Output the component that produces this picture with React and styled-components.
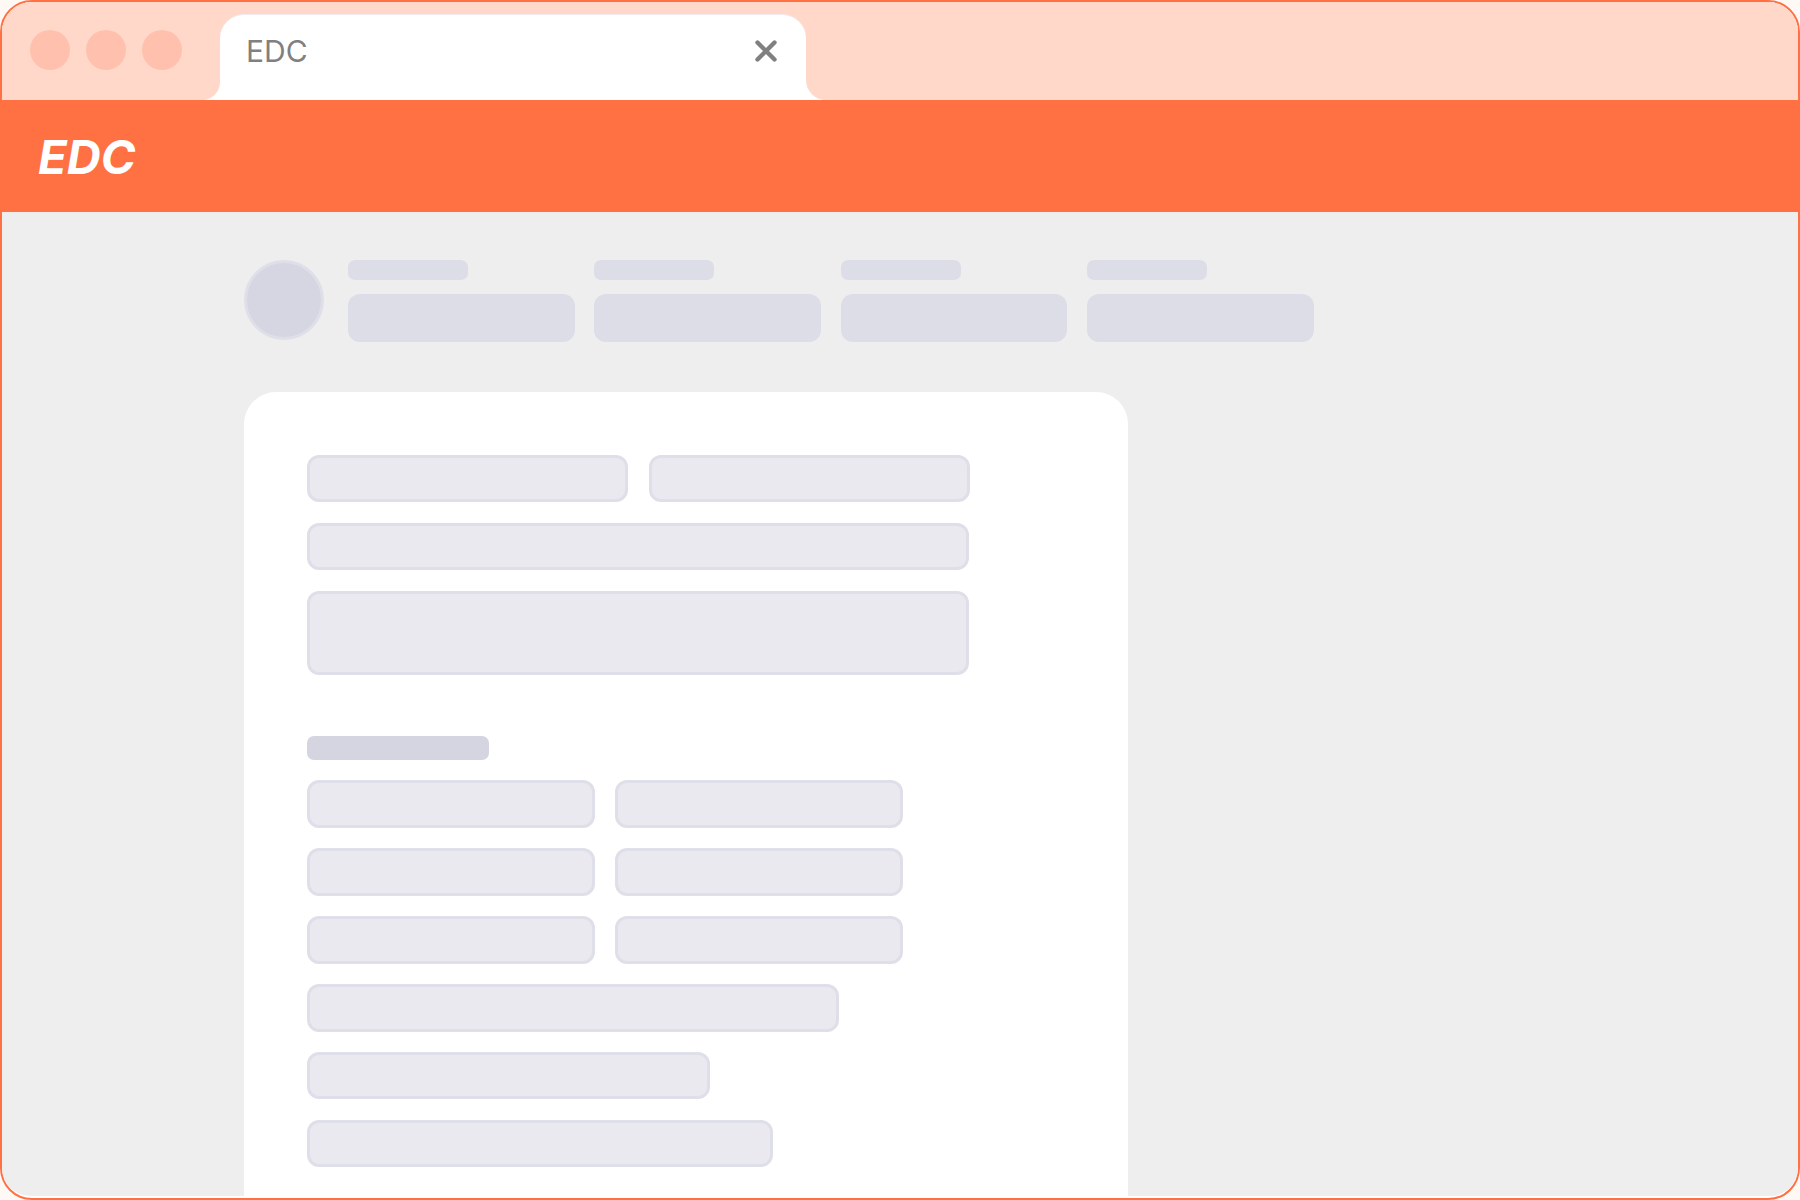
import React from "react";
import styled, { createGlobalStyle } from "styled-components";

const Global = createGlobalStyle`
  html, body { margin: 0; padding: 0; background: #fff9f5; }
  * { box-sizing: border-box; }
`;

const Frame = styled.div`
  width: 1800px;
  height: 1200px;
  border: 2px solid #ff7043;
  border-radius: 32px;
  overflow: hidden;
  background: #fff;
  display: flex;
  flex-direction: column;
  font-family: Inter, "Liberation Sans", Arial, sans-serif;
`;

const TabStrip = styled.div`
  height: 98px;
  flex: none;
  display: flex;
  background: linear-gradient(#ffd8ca 50%, #fff 50%);
`;

const Controls = styled.div`
  width: 218px;
  flex: none;
  display: flex;
  align-items: center;
  gap: 16px;
  padding: 0 0 2px 28px;
  background: #ffd8ca;
  border-bottom-right-radius: 18px;
`;

const Dot = styled.span`
  width: 40px;
  height: 40px;
  border-radius: 50%;
  background: #ffc1ad;
`;

const Tab = styled.div`
  width: 586px;
  flex: none;
  margin-top: 12px;
  padding: 0 29px 14px 26px;
  display: flex;
  align-items: center;
  justify-content: space-between;
  background: #fff;
  border-top: 1px solid #eeeaf0;
  border-radius: 24px 24px 0 0;
`;

const TabTitle = styled.span`
  font-size: 30px;
  line-height: 1;
  color: #808080;
`;

const TabFill = styled.div`
  flex: 1;
  background: #ffd8ca;
  border-bottom-left-radius: 20px;
`;

const Brandbar = styled.header`
  height: 112px;
  flex: none;
  display: flex;
  align-items: center;
  padding-left: 36px;
  background: #ff7043;
`;

const Logo = styled.div`
  font-size: 47px;
  line-height: 1;
  font-weight: 700;
  font-style: italic;
  color: #fff;
`;

const Workspace = styled.main`
  flex: 1;
  min-height: 0;
  margin-bottom: 2px;
  padding: 48px 0 0 242px;
  display: flex;
  flex-direction: column;
  gap: 50px;
  background: #eeeeee;
  border-radius: 0 0 28px 28px;
`;

const Steps = styled.div`
  display: flex;
  align-items: flex-start;
`;

const Avatar = styled.div`
  width: 80px;
  height: 80px;
  flex: none;
  margin-right: 24px;
  border-radius: 50%;
  background: #d6d6e2;
  border: 3px solid #dfdfe9;
`;

const Step = styled.div`
  width: 226.67px;
  flex: none;
  margin-right: 19.67px;
  display: flex;
  flex-direction: column;
  gap: 14px;
`;

const StepLabel = styled.div`
  width: 120px;
  height: 20px;
  border-radius: 7px;
  background: #dddde8;
`;

const StepValue = styled.div`
  height: 48px;
  border-radius: 12px;
  background: #dddde8;
`;

const Card = styled.section`
  width: 884px;
  flex: 1;
  min-height: 0;
  padding: 63px 63px 0;
  display: flex;
  flex-direction: column;
  background: #fff;
  border-radius: 32px 32px 0 0;
`;

const Group = styled.div`
  display: flex;
  flex-direction: column;
  gap: 20.6px;
`;

const Row = styled.div`
  display: flex;
  gap: 20.6px;
`;

const Field = styled.div`
  width: ${(p) => p.$w}px;
  height: ${(p) => p.$h || 47.4}px;
  flex: none;
  border-radius: 12px;
  border: 3px solid #dfdfe9;
  background: #eae9f0;
`;

const SectionLabel = styled.div`
  width: 182px;
  height: 24px;
  margin-top: 40px;
  border-radius: 7px;
  background: #d5d5e1;
`;

const CloseIcon = () => (
  <svg width="22" height="22" viewBox="0 0 22 22" fill="none">
    <path d="M2.5 2.5 L19.5 19.5 M19.5 2.5 L2.5 19.5" stroke="#808080" strokeWidth="4.4" strokeLinecap="round" />
  </svg>
);

export default function App() {
  return (
    <>
      <Global />
      <Frame>
        <TabStrip>
          <Controls>
            <Dot />
            <Dot />
            <Dot />
          </Controls>
          <Tab>
            <TabTitle>EDC</TabTitle>
            <CloseIcon />
          </Tab>
          <TabFill />
        </TabStrip>
        <Brandbar>
          <Logo>EDC</Logo>
        </Brandbar>
        <Workspace>
          <Steps>
            <Avatar />
            {[0, 1, 2, 3].map((i) => (
              <Step key={i}>
                <StepLabel />
                <StepValue />
              </Step>
            ))}
          </Steps>
          <Card>
            <Group>
              <Row>
                <Field $w={321} />
                <Field $w={321} />
              </Row>
              <Field $w={662} />
              <Field $w={662} $h={84} />
              <SectionLabel />
              <Row>
                <Field $w={287.5} />
                <Field $w={288} />
              </Row>
              <Row>
                <Field $w={287.5} />
                <Field $w={288} />
              </Row>
              <Row>
                <Field $w={287.5} />
                <Field $w={288} />
              </Row>
              <Field $w={532} />
              <Field $w={403} />
              <Field $w={466} />
            </Group>
          </Card>
        </Workspace>
      </Frame>
    </>
  );
}
